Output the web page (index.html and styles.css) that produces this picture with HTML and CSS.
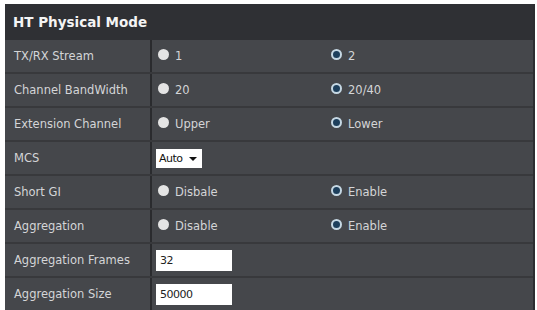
FILE: index.html
```html
<!DOCTYPE html>
<html lang="en">

<head>
    <meta charset="UTF-8">
    <title>HT Physical Mode</title>
    <link rel="stylesheet" href="styles.css">
</head>

<body>
    <div class="panel">
        <div class="panel-title">HT Physical Mode</div>
        <table class="settings">
            <tr>
                <td class="label">TX/RX Stream</td>
                <td class="opt first"><span class="radio"></span>1</td>
                <td class="opt"><span class="radio on"></span>2</td>
            </tr>
            <tr>
                <td class="label">Channel BandWidth</td>
                <td class="opt first"><span class="radio"></span>20</td>
                <td class="opt"><span class="radio on"></span>20/40</td>
            </tr>
            <tr>
                <td class="label">Extension Channel</td>
                <td class="opt first"><span class="radio"></span>Upper</td>
                <td class="opt"><span class="radio on"></span>Lower</td>
            </tr>
            <tr>
                <td class="label">MCS</td>
                <td colspan="2"><span class="select">Auto<span class="caret"></span></span></td>
            </tr>
            <tr>
                <td class="label">Short GI</td>
                <td class="opt first"><span class="radio"></span>Disbale</td>
                <td class="opt"><span class="radio on"></span>Enable</td>
            </tr>
            <tr>
                <td class="label">Aggregation</td>
                <td class="opt first"><span class="radio"></span>Disable</td>
                <td class="opt"><span class="radio on"></span>Enable</td>
            </tr>
            <tr>
                <td class="label">Aggregation Frames</td>
                <td colspan="2"><span class="field">32</span></td>
            </tr>
            <tr>
                <td class="label">Aggregation Size</td>
                <td colspan="2"><span class="field">50000</span></td>
            </tr>
        </table>
    </div>
</body>

</html>
```

FILE: styles.css
```css
body {
    margin: 0;
    padding: 4px 2px 2px 5px;
    background: #fff;
    font-family: 'DejaVu Sans', Verdana, sans-serif;
}

.panel {
    background: #45474b;
    border-right: 2px solid #2c2d30;
    width: 528px;
}

.panel-title {
    background: #2f3034;
    color: #f4f4f4;
    font-weight: bold;
    font-size: 13.5px;
    height: 36px;
    line-height: 36px;
    padding-left: 8px;
}

.settings {
    width: 100%;
    table-layout: fixed;
    border-collapse: collapse;
    font-size: 11.5px;
    color: #d4d5d7;
}

.settings td {
    height: 32px;
    padding: 0;
    border-bottom: 2px solid #38393c;
    white-space: nowrap;
}

.settings tr:last-child td {
    border-bottom: none;
}

.label {
    width: 136px;
    padding-left: 9px !important;
    border-right: 2px solid #2a2b2e;
}

.opt {
    padding-left: 6px !important;
}

.opt.first {
    width: 167px;
}

.radio {
    display: inline-block;
    width: 11px;
    height: 11px;
    border-radius: 50%;
    background: #e4e4e4;
    margin-right: 6px;
    vertical-align: 0;
}

.radio.on {
    background: #1d3f5c;
    border: 2px solid #c6d8e4;
    width: 7px;
    height: 7px;
}

.select {
    display: inline-block;
    margin-left: 4px;
    background: #fff;
    color: #111;
    width: 43px;
    height: 19px;
    line-height: 19px;
    padding-left: 3px;
    font-size: 11px;
    letter-spacing: -0.5px;
}

.caret {
    display: inline-block;
    border-left: 4px solid transparent;
    border-right: 4px solid transparent;
    border-top: 4px solid #111;
    margin-left: 6px;
    vertical-align: middle;
}

.field {
    display: inline-block;
    margin-left: 4px;
    background: #fff;
    color: #222;
    width: 72px;
    height: 21px;
    line-height: 21px;
    padding-left: 4px;
    font-size: 11px;
    letter-spacing: -0.5px;
}
```
